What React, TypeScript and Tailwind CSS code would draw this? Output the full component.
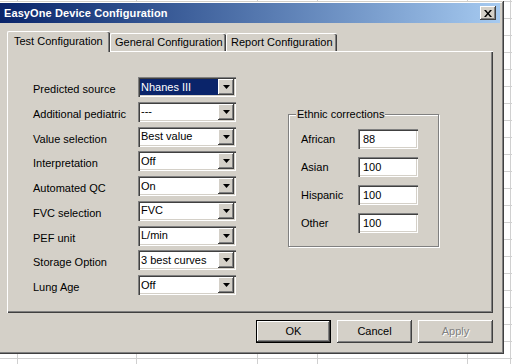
import React from 'react'

const font = { fontFamily: '"Liberation Sans", Arial, sans-serif' }

const raised = 'shadow-[inset_-1px_-1px_0_#404040,inset_1px_1px_0_#fff,inset_-2px_-2px_0_#808080]'
const sunken = 'shadow-[inset_1px_1px_0_#808080,inset_2px_2px_0_#404040,inset_-1px_-1px_0_#fff,inset_-2px_-2px_0_#d4d0c8]'

const rows = [
  { label: 'Predicted source', value: 'Nhanes III', selected: true },
  { label: 'Additional pediatric', value: '---' },
  { label: 'Value selection', value: 'Best value' },
  { label: 'Interpretation', value: 'Off' },
  { label: 'Automated QC', value: 'On' },
  { label: 'FVC selection', value: 'FVC' },
  { label: 'PEF unit', value: 'L/min' },
  { label: 'Storage Option', value: '3 best curves' },
  { label: 'Lung Age', value: 'Off' },
]

const ethnic = [
  { label: 'African', value: '88' },
  { label: 'Asian', value: '100' },
  { label: 'Hispanic', value: '100' },
  { label: 'Other', value: '100' },
]

function Combo({ value, selected }: { value: string; selected?: boolean }) {
  return (
    <div className={`flex h-[20px] w-[98px] items-stretch bg-white p-[2px] ${sunken}`}>
      <div
        className={`flex flex-1 items-center pl-[1px] text-[11px] leading-none ${
          selected ? 'bg-[#0a246a] text-white' : 'text-black'
        }`}
      >
        {value}
      </div>
      <div className={`flex w-[16px] items-center justify-center bg-[#d4d0c8] ${raised}`}>
        <svg width="7" height="4" viewBox="0 0 7 4">
          <path d="M0 0h7L3.5 4z" fill="#000" />
        </svg>
      </div>
    </div>
  )
}

function Button({ label, isDefault, disabled }: { label: string; isDefault?: boolean; disabled?: boolean }) {
  return (
    <div
      className={`flex h-[23px] w-[75px] items-center justify-center bg-[#d4d0c8] text-[11px] ${
        isDefault
          ? 'border border-black shadow-[inset_-1px_-1px_0_#404040,inset_1px_1px_0_#fff,inset_-2px_-2px_0_#808080]'
          : raised
      } ${disabled ? 'text-[#808080] [text-shadow:1px_1px_0_#fff]' : 'text-black'}`}
    >
      {label}
    </div>
  )
}

export default function App() {
  const vLines = [17, 136, 257, 317, 467, 510]
  const hLines = Array.from({ length: 22 }, (_, i) => 1 + i * 17)

  return (
    <div className="relative h-[364px] w-[512px] overflow-hidden bg-white" style={font}>
      <svg className="absolute inset-0" width="512" height="364">
        {vLines.map((x) => (
          <line key={x} x1={x + 0.5} y1="0" x2={x + 0.5} y2="364" stroke="#d0d0d0" />
        ))}
        {hLines.map((y) => (
          <line key={y} x1="0" y1={y + 0.5} x2="512" y2={y + 0.5} stroke="#d0d0d0" />
        ))}
      </svg>

      <div
        className={`relative ml-[-3px] mt-[1px] flex h-[353px] w-[507px] flex-col bg-[#d4d0c8] p-[2px] shadow-[inset_-1px_-1px_0_#404040,inset_1px_1px_0_#d4d0c8,inset_-2px_-2px_0_#808080,inset_2px_2px_0_#fff]`}
      >
        {/* title bar */}
        <div className="ml-[1px] flex h-[20px] w-[500px] items-center justify-between bg-gradient-to-r from-[#0a246a] to-[#a6caf0] pl-[4px] pr-[4px]">
          <span className="text-[11px] font-bold tracking-[0.1px] text-white">EasyOne Device Configuration</span>
          <div className={`flex h-[14px] w-[16px] items-center justify-center bg-[#d4d0c8] ${raised}`}>
            <svg width="8" height="7" viewBox="0 0 8 7">
              <path d="M0 0h2l2 2.5L6 0h2L5 3.5 8 7H6L4 4.5 2 7H0l3-3.5z" fill="#000" />
            </svg>
          </div>
        </div>

        {/* tabs */}
        <div className="ml-[8px] mt-[8px] flex h-[20px] items-end">
          <div className="relative z-10 mb-[-1px] flex h-[21px] w-[103px] items-start rounded-t-[2px] border-l border-t border-white bg-[#d4d0c8] pl-[6px] pt-[1px] text-[11px] shadow-[inset_-1px_0_0_#404040,inset_-2px_0_0_#808080]">
            Test Configuration
          </div>
          <div className="flex h-[18px] w-[116px] items-start rounded-t-[2px] border-l border-t border-white pl-[4px] pt-0 text-[11px] shadow-[inset_-1px_0_0_#404040,inset_-2px_0_0_#808080]">
            General Configuration
          </div>
          <div className="flex h-[18px] w-[111px] items-start rounded-t-[2px] border-l border-t border-white pl-[4px] pt-0 text-[11px] shadow-[inset_-1px_0_0_#404040,inset_-2px_0_0_#808080]">
            Report Configuration
          </div>
        </div>

        {/* panel */}
        <div className="ml-[8px] flex h-[262px] w-[486px] border-l border-t border-white pl-[25px] pt-[25px] shadow-[inset_-1px_-1px_0_#404040,inset_-2px_-2px_0_#808080]">
          <div className="flex flex-col gap-[4.75px]">
            {rows.map((r) => (
              <div key={r.label} className="flex h-[20px] items-center">
                <div className="w-[105px] pt-[5px] text-[11px] leading-[13px] text-black">{r.label}</div>
                <Combo value={r.value} selected={r.selected} />
              </div>
            ))}
          </div>

          <div className="relative ml-[52px] mt-[37px] flex h-[133px] w-[151px] flex-col border border-[#808080] pl-[12px] pt-[14px] shadow-[inset_1px_1px_0_#fff,1px_1px_0_#fff]">
            <span className="absolute left-[7px] top-[-8px] bg-[#d4d0c8] px-[1px] text-[11px] leading-[14px] text-black">
              Ethnic corrections
            </span>
            <div className="flex flex-col gap-[8px]">
              {ethnic.map((e) => (
                <div key={e.label} className="flex items-center">
                  <div className="w-[57px] text-[11px] text-black">{e.label}</div>
                  <div className={`flex h-[20px] w-[60px] items-center bg-white pl-[5px] text-[11px] ${sunken}`}>
                    {e.value}
                  </div>
                </div>
              ))}
            </div>
          </div>
        </div>

        {/* buttons */}
        <div className="mt-[7px] flex w-[494px] justify-end gap-[6px] pl-[3px]">
          <Button label="OK" isDefault />
          <Button label="Cancel" />
          <Button label="Apply" disabled />
        </div>
      </div>
    </div>
  )
}
